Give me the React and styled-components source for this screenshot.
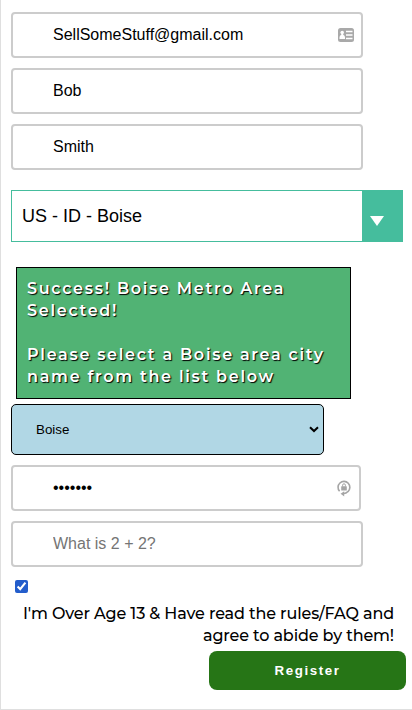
import { useState } from "react";
import styled, { createGlobalStyle } from "styled-components";

const GlobalStyle = createGlobalStyle`
  * {
    box-sizing: border-box;
  }
  body {
    margin: 0;
    background-color: white;
    font-family: "Liberation Sans", Arial, sans-serif;
  }
`;

const Container = styled.form`
  height: 710px;
  padding: 12px 6px 0 10px;
  display: flex;
  flex-direction: column;
  align-items: flex-start;
  border-left: 1px solid #dfdfdf;
  border-bottom: 1px solid #dfdfdf;
  overflow: hidden;
`;

const Field = styled.div`
  width: ${(props) => props.$width || 352}px;
  height: 46px;
  flex: none;
  margin-bottom: 10px;
  padding: 0 7px 0 40px;
  display: flex;
  align-items: center;
  border: 2px solid #ccc;
  border-radius: 4px;
  background-color: white;
`;

const Input = styled.input`
  flex: 1;
  min-width: 0;
  padding: 0;
  border: none;
  outline: none;
  background: none;
  color: black;
  font: 16px "Liberation Sans", Arial, sans-serif;

  &::placeholder {
    color: #757575;
  }
`;

const Metro = styled.div`
  width: 392px;
  height: 52px;
  flex: none;
  margin: 10px 0 25px;
  display: flex;
  border: 1px solid #45bd9d;
`;

const MetroName = styled.div`
  flex: 1;
  padding-left: 10px;
  line-height: 50px;
  font-size: 18px;
`;

const MetroArrow = styled.div`
  width: 40px;
  padding: 25px 0 0 8px;
  background-color: #45bd9d;
`;

const Triangle = styled.div`
  width: 0;
  border: 7px solid transparent;
  border-top: 10px solid white;
  border-bottom: none;
`;

const Message = styled.div`
  width: 335px;
  height: 132px;
  flex: none;
  margin: 0 0 5px 5px;
  padding: 10px 5px 10px 10px;
  border: 1px solid black;
  background-color: #51b374;
  color: white;
  font: 600 16px/22px Montserrat, Inter, sans-serif;
  letter-spacing: 1.7px;
  text-shadow: 1px 1px 1px black;
`;

const CitySelect = styled.div`
  width: 313px;
  height: 51px;
  flex: none;
  margin-bottom: 10px;
  padding: 0 4px 0 24px;
  display: flex;
  align-items: center;
  justify-content: space-between;
  border: 1px solid black;
  border-radius: 5px;
  background-color: #b1d7e5;
  font-size: 13.33px;
`;

const Checkbox = styled.input`
  width: 13px;
  height: 13px;
  flex: none;
  margin: 3px 0 10px 4px;
  accent-color: #235dcb;
`;

const Terms = styled.div`
  align-self: stretch;
  margin: 0 12px 4px 0;
  text-align: right;
  font: 500 16px/22px Montserrat, Inter, sans-serif;
  letter-spacing: -0.13px;
`;

const Button = styled.button`
  width: 197px;
  height: 39px;
  flex: none;
  align-self: flex-end;
  border: none;
  border-radius: 8px;
  background-color: #267516;
  color: white;
  font: bold 13.33px "Liberation Sans", Arial, sans-serif;
  letter-spacing: 1.6px;
`;

const ContactIcon = () => (
  <svg width="16" height="14" viewBox="0 0 16 14">
    <rect width="16" height="14" rx="2.5" fill="#a9a9a9" />
    <circle cx="4.2" cy="4.5" r="1.8" fill="white" />
    <path d="M1.5 11V9.2Q1.7 7.4 3 7L3.5 6H5l.5 1Q6.8 7.4 7 9.2V11Z" fill="white" />
    <path d="M8 3.5h6.5M8 7h6.5M8 10.5h6.5" stroke="white" strokeWidth="1.3" />
  </svg>
);

const PasswordIcon = () => (
  <svg width="15" height="17" viewBox="0 0 15 17" fill="none" stroke="#a5a5a5">
    <path d="M2.6 11.3A5.9 5.9 0 1 1 11 11.6Q9.4 13.5 6 13.7" strokeWidth="1.6" />
    <path d="M3.6 13.7 7.2 11.2v5.2Z" fill="#a5a5a5" stroke="none" />
    <rect x="4.2" y="6.2" width="5.6" height="4.2" rx=".5" fill="#a5a5a5" stroke="none" />
    <path d="M5.6 6.5V5.2a1.4 1.4 0 0 1 2.8 0v1.3" strokeWidth="1" />
  </svg>
);

const App = () => {
  const [email, setEmail] = useState("SellSomeStuff@gmail.com");
  const [firstName, setFirstName] = useState("Bob");
  const [lastName, setLastName] = useState("Smith");
  const [password, setPassword] = useState("example");
  const [answer, setAnswer] = useState("");

  return (
    <>
      <GlobalStyle />
      <Container onSubmit={(e) => e.preventDefault()}>
        <Field>
          <Input value={email} onChange={(e) => setEmail(e.target.value)} />
          <ContactIcon />
        </Field>
        <Field>
          <Input value={firstName} onChange={(e) => setFirstName(e.target.value)} />
        </Field>
        <Field>
          <Input value={lastName} onChange={(e) => setLastName(e.target.value)} />
        </Field>
        <Metro>
          <MetroName>US - ID - Boise</MetroName>
          <MetroArrow>
            <Triangle />
          </MetroArrow>
        </Metro>
        <Message>
          Success! Boise Metro Area
          <br />
          Selected!
          <br />
          <br />
          Please select a Boise area city
          <br />
          name from the list below
        </Message>
        <CitySelect>
          Boise
          <svg width="10" height="7" viewBox="0 0 10 7">
            <path d="M1 1.2 5 5 9 1.2" fill="none" stroke="black" strokeWidth="2" />
          </svg>
        </CitySelect>
        <Field $width={350}>
          <Input
            type="password"
            value={password}
            onChange={(e) => setPassword(e.target.value)}
          />
          <PasswordIcon />
        </Field>
        <Field>
          <Input
            placeholder="What is 2 + 2?"
            value={answer}
            onChange={(e) => setAnswer(e.target.value)}
          />
        </Field>
        <Checkbox type="checkbox" defaultChecked />
        <Terms>
          I'm Over Age 13 & Have read the rules/FAQ and
          <br />
          agree to abide by them!
        </Terms>
        <Button>Register</Button>
      </Container>
    </>
  );
};

export default App;
